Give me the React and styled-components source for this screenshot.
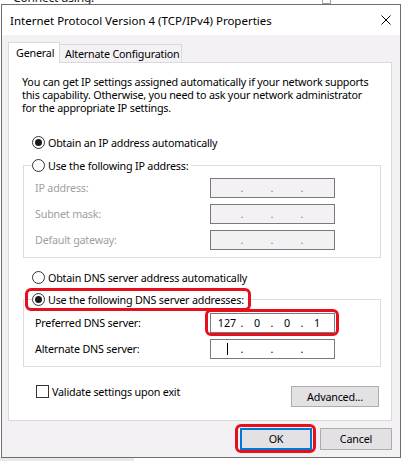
import React from 'react';
import styled, { createGlobalStyle } from 'styled-components';

const GlobalStyle = createGlobalStyle`
  html, body { margin: 0; padding: 0; background: #fff; }
  body {
    font-family: "Noto Sans", "Liberation Sans", sans-serif;
    font-size: 10.75px;
    letter-spacing: -0.2px;
    color: #000;
  }
  * { box-sizing: border-box; }
`;

const Screen = styled.div`
  position: relative;
  width: 405px;
  height: 461px;
  overflow: hidden;
  background: #fff;
  padding: 4px 0 0 1px;
`;

const BackText = styled.div`
  position: absolute;
  top: -11px;
  left: 13px;
  font-size: 12px;
  color: #222;
`;

const BackScroll = styled.div`
  position: absolute;
  top: -10px;
  left: 322px;
  width: 9px;
  height: 14px;
  border: 1px solid #a0a0a0;
  background: #fff;
`;

const BackStrip = styled.div`
  position: absolute;
  left: 0;
  bottom: 0;
  width: 134px;
  height: 4px;
  background: #e9e9e9;
`;

const Dialog = styled.div`
  position: relative;
  z-index: 1;
  width: 400px;
  height: 454px;
  border: 1px solid #6f6f6f;
  background: #f4f1f5;
  display: flex;
  flex-direction: column;
`;

const TitleBar = styled.div`
  height: 30px;
  flex: none;
  background: #fff;
  display: flex;
  align-items: center;
  justify-content: space-between;
  padding: 0 9px 0 8px;
  font-size: 11.5px;
  letter-spacing: 0;
`;

const Body = styled.div`
  flex: 1;
  display: flex;
  flex-direction: column;
  padding: 7px 8px 0 6px;
`;

const TabRow = styled.div`
  display: flex;
  align-items: flex-end;
  height: 21px;
  margin-bottom: -1px;
  position: relative;
  z-index: 1;
`;

const Tab = styled.div`
  display: flex;
  align-items: center;
  white-space: nowrap;
  height: ${p => (p.$active ? 21 : 19)}px;
  width: ${p => p.$w}px;
  padding-left: ${p => p.$pl}px;
  background: ${p => (p.$active ? '#fff' : '#f4f1f5')};
  border: 1px solid #d9d9d9;
  border-bottom: ${p => (p.$active ? 'none' : '1px solid #d9d9d9')};
  border-left: ${p => (p.$active ? '1px solid #d9d9d9' : 'none')};
`;

const Panel = styled.div`
  width: 384px;
  height: 359px;
  flex: none;
  background: #fff;
  border: 1px solid #d9d9d9;
  padding: 13px 0 0 13px;
  display: flex;
  flex-direction: column;
  align-items: flex-start;
`;

const Intro = styled.p`
  margin: 0;
  line-height: 13px;
  white-space: nowrap;
`;

const Option = styled.label`
  display: flex;
  align-items: center;
  gap: 3px;
  height: 15px;
  white-space: nowrap;
  margin-top: ${p => p.$mt || 0}px;
  margin-left: ${p => p.$ml || 0}px;
`;

const Radio = styled.span`
  width: 13px;
  height: 13px;
  flex: none;
  border-radius: 50%;
  border: 1px solid #333;
  background: #fff;
  display: flex;
  align-items: center;
  justify-content: center;
  &::after {
    content: '';
    width: 7px;
    height: 7px;
    border-radius: 50%;
    background: #1a1a1a;
    display: ${p => (p.$checked ? 'block' : 'none')};
  }
`;

const Check = styled.span`
  width: 13px;
  height: 13px;
  flex: none;
  border: 1px solid #333;
  background: #fff;
`;

const Group = styled.div`
  width: 358px;
  margin-top: ${p => p.$mt}px;
  margin-left: 1px;
  border: 1px solid #dcdcdc;
  padding-bottom: 7px;
  display: flex;
  flex-direction: column;
  align-items: flex-start;
`;

const Legend = styled.div`
  display: flex;
  height: 15px;
  margin: -8px 0 0 8px;
  padding-right: 3px;
  background: #fff;
`;

const Fields = styled.div`
  display: grid;
  grid-template-columns: 175px 125px;
  row-gap: 6px;
  align-items: center;
  padding-left: 11px;
  margin-top: ${p => p.$mt}px;
`;

const FieldLabel = styled.span`
  color: ${p => (p.$disabled ? '#a0a0a0' : '#000')};
  white-space: nowrap;
`;

const IpBox = styled.div`
  width: 125px;
  height: 20px;
  border: 1px solid #7a7a7a;
  background: ${p => (p.$disabled ? '#f4f1f5' : '#fff')};
  display: flex;
  align-items: center;
  padding-left: 2px;
  color: ${p => (p.$disabled ? '#808080' : '#000')};
  letter-spacing: 0;
`;

const Seg = styled.span`
  width: 28px;
  display: flex;
  justify-content: center;
  align-items: center;
  height: 18px;
`;

const Dot = styled.span`
  width: 2px;
  display: flex;
  justify-content: center;
  height: 18px;
  align-items: center;
`;

const Caret = styled.span`
  width: 1px;
  height: 12px;
  background: #000;
`;

const Callout = styled.span`
  display: inline-flex;
  border: 3px solid #e5101c;
  border-radius: 6px;
  padding: ${p => p.$pad};
  margin: ${p => p.$margin};
`;

const BottomRow = styled.div`
  width: 358px;
  margin: 18px 0 0 1px;
  padding: 0 2px 0 13px;
  display: flex;
  justify-content: space-between;
  align-items: flex-start;
`;

const CheckOption = styled.label`
  display: flex;
  align-items: center;
  gap: 3px;
  height: 13px;
  white-space: nowrap;
`;

const Button = styled.button`
  width: ${p => p.$w}px;
  height: ${p => p.$h}px;
  margin-top: ${p => p.$mt || 0}px;
  font: inherit;
  letter-spacing: inherit;
  color: #000;
  background: #e4e1e5;
  border: ${p => (p.$focused ? '2px solid #0078d7' : '1px solid #adadad')};
  padding: 0;
  display: flex;
  align-items: center;
  justify-content: center;
`;

const Footer = styled.div`
  display: flex;
  justify-content: flex-end;
  align-items: center;
  gap: 8px;
  margin-top: 7px;
`;

const CloseIcon = () => (
  <svg width="10" height="10" viewBox="0 0 10 10">
    <path d="M0.5 0.5 L9.5 9.5 M9.5 0.5 L0.5 9.5" stroke="#000" strokeWidth="1" fill="none" />
  </svg>
);

const IpValue = ({ parts = ['', '', '', ''], disabled, caret }) => (
  <IpBox $disabled={disabled}>
    <Seg>{caret ? <Caret /> : parts[0]}</Seg>
    <Dot>.</Dot>
    <Seg>{parts[1]}</Seg>
    <Dot>.</Dot>
    <Seg>{parts[2]}</Seg>
    <Dot>.</Dot>
    <Seg>{parts[3]}</Seg>
  </IpBox>
);

export default function App() {
  return (
    <>
      <GlobalStyle />
      <Screen>
        <BackText>Connect using:</BackText>
        <BackScroll />
        <BackStrip />
        <Dialog>
          <TitleBar>
            <span>Internet Protocol Version 4 (TCP/IPv4) Properties</span>
            <CloseIcon />
          </TitleBar>
          <Body>
            <TabRow>
              <Tab $active $w={52} $pl={7}>General</Tab>
              <Tab $w={122} $pl={5}>Alternate Configuration</Tab>
            </TabRow>
            <Panel>
              <Intro>
                You can get IP settings assigned automatically if your network supports
                <br />
                this capability. Otherwise, you need to ask your network administrator
                <br />
                for the appropriate IP settings.
              </Intro>

              <Option $mt={20} $ml={10}>
                <Radio $checked />
                <span>Obtain an IP address automatically</span>
              </Option>

              <Group $mt={15}>
                <Legend>
                  <Option>
                    <Radio />
                    <span>Use the following IP address:</span>
                  </Option>
                </Legend>
                <Fields $mt={5}>
                  <FieldLabel $disabled>IP address:</FieldLabel>
                  <IpValue disabled />
                  <FieldLabel $disabled>Subnet mask:</FieldLabel>
                  <IpValue disabled />
                  <FieldLabel $disabled>Default gateway:</FieldLabel>
                  <IpValue disabled />
                </Fields>
              </Group>

              <Option $mt={12} $ml={10}>
                <Radio />
                <span>Obtain DNS server address automatically</span>
              </Option>

              <Group $mt={14}>
                <Legend>
                  <Callout $pad="1px 4px" $margin="-4px -7px">
                    <Option>
                      <Radio $checked />
                      <span>Use the following DNS server addresses:</span>
                    </Option>
                  </Callout>
                </Legend>
                <Fields $mt={6}>
                  <FieldLabel>Preferred DNS server:</FieldLabel>
                  <Callout $pad="1px 1px 0 2px" $margin="-4px -4px -3px -5px">
                    <IpValue parts={['127', '0', '0', '1']} />
                  </Callout>
                  <FieldLabel>Alternate DNS server:</FieldLabel>
                  <IpValue caret />
                </Fields>
              </Group>

              <BottomRow>
                <CheckOption>
                  <Check />
                  <span>Validate settings upon exit</span>
                </CheckOption>
                <Button $w={88} $h={21} $mt={1}>Advanced...</Button>
              </BottomRow>
            </Panel>

            <Footer>
              <Callout $pad="1px 1px 0 2px" $margin="-4px -4px -3px -5px">
                <Button $w={72} $h={22} $focused>OK</Button>
              </Callout>
              <Button $w={72} $h={22}>Cancel</Button>
            </Footer>
          </Body>
        </Dialog>
      </Screen>
    </>
  );
}
